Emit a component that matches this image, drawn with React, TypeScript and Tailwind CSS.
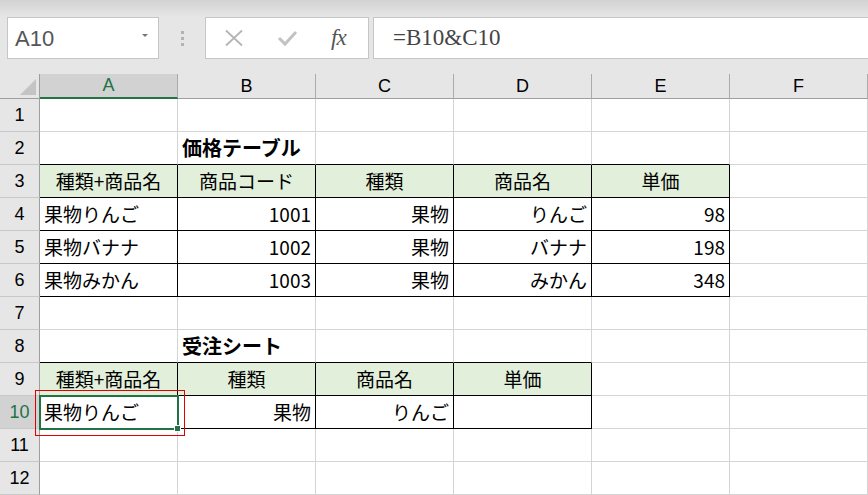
import * as React from 'react'

type Cell = { v: string; align?: 'l' | 'c' | 'r'; bold?: boolean }

const cols = ['A', 'B', 'C', 'D', 'E', 'F']

const data: Record<number, Cell[]> = {
  2: [{ v: '' }, { v: '価格テーブル', bold: true }],
  3: [
    { v: '種類+商品名', align: 'c' },
    { v: '商品コード', align: 'c' },
    { v: '種類', align: 'c' },
    { v: '商品名', align: 'c' },
    { v: '単価', align: 'c' },
  ],
  4: [
    { v: '果物りんご' },
    { v: '1001', align: 'r' },
    { v: '果物', align: 'r' },
    { v: 'りんご', align: 'r' },
    { v: '98', align: 'r' },
  ],
  5: [
    { v: '果物バナナ' },
    { v: '1002', align: 'r' },
    { v: '果物', align: 'r' },
    { v: 'バナナ', align: 'r' },
    { v: '198', align: 'r' },
  ],
  6: [
    { v: '果物みかん' },
    { v: '1003', align: 'r' },
    { v: '果物', align: 'r' },
    { v: 'みかん', align: 'r' },
    { v: '348', align: 'r' },
  ],
  8: [{ v: '' }, { v: '受注シート', bold: true }],
  9: [
    { v: '種類+商品名', align: 'c' },
    { v: '種類', align: 'c' },
    { v: '商品名', align: 'c' },
    { v: '単価', align: 'c' },
  ],
  10: [{ v: '果物りんご' }, { v: '果物', align: 'r' }, { v: 'りんご', align: 'r' }, { v: '' }],
}

const inTable = (r: number, c: number) =>
  (r >= 3 && r <= 6 && c <= 4) || (r >= 9 && r <= 10 && c <= 3)

const isHead = (r: number, c: number) => (r === 3 && c <= 4) || (r === 9 && c <= 3)

const font = { fontFamily: '"Noto Sans CJK JP", "Liberation Sans", sans-serif' }

export default function App() {
  const rows = Array.from({ length: 12 }, (_, i) => i + 1)

  return (
    <div className="w-[868px] h-[495px] overflow-hidden bg-[#e6e6e6] select-none">
      {/* ribbon edge */}
      <div className="h-[17px] bg-gradient-to-b from-[#d2d2d2] to-[#e6e6e6]" />

      {/* formula bar */}
      <div className="flex items-stretch h-[42px] pl-[7px]">
        <div className="w-[152px] bg-white border border-[#c6c6c6] flex items-center justify-between pl-[7px] pr-[10px]">
          <span className="text-[22px] text-[#555]" style={{ fontFamily: '"Liberation Sans", sans-serif' }}>
            A10
          </span>
          <span className="w-0 h-0 border-l-[3px] border-r-[3px] border-t-[3px] border-l-transparent border-r-transparent border-t-[#777] mb-[6px]" />
        </div>
        <div className="w-[46px] flex flex-col items-center justify-center gap-[3px]">
          <span className="w-[3px] h-[3px] bg-[#b3b3b3]" />
          <span className="w-[3px] h-[3px] bg-[#b3b3b3]" />
          <span className="w-[3px] h-[3px] bg-[#b3b3b3]" />
        </div>
        <div className="w-[164px] bg-white border border-[#c6c6c6] flex items-center pl-[17px]">
          <svg width="22" height="22" viewBox="0 0 22 22" className="mr-[32px]">
            <path d="M3 3.5 L19 18.5 M19 3.5 L3 18.5" stroke="#b5b5b5" strokeWidth="1.8" fill="none" />
          </svg>
          <svg width="22" height="22" viewBox="0 0 22 22" className="mr-[32px]">
            <path d="M2 11 L8 17 L19 5" stroke="#c2c2c2" strokeWidth="3" fill="none" />
          </svg>
          <span className="text-[23px] italic text-[#555] tracking-[-1px]" style={{ fontFamily: '"Liberation Serif", serif' }}>
            fx
          </span>
        </div>
        <div className="ml-[4px] flex-1 bg-white border border-[#c6c6c6] border-r-0 flex items-center pl-[19px]">
          <span className="text-[23px] text-[#444]" style={{ fontFamily: '"Liberation Serif", serif' }}>
            =B10&amp;C10
          </span>
        </div>
      </div>

      <div className="h-[15px]" />

      {/* sheet */}
      <div className="grid grid-cols-[40px_repeat(6,138px)] grid-rows-[25px_repeat(12,33px)]">
        {/* corner */}
        <div className="border-r border-b border-[#9e9e9e] bg-[#e6e6e6] relative">
          <span
            className="absolute right-[3px] bottom-[3px] w-0 h-0"
            style={{ borderBottom: '16px solid #c4c4c4', borderLeft: '16px solid transparent' }}
          />
        </div>
        {cols.map((c, i) => (
          <div
            key={c}
            className={
              i === 0
                ? 'flex items-center justify-center bg-[#d2d2d2] border-r border-[#ababab] border-b-2 border-b-[#217346] text-[#217346] text-[18px]'
                : 'flex items-center justify-center bg-[#e6e6e6] border-r border-[#ababab] border-b border-b-[#9e9e9e] text-black text-[18px]'
            }
            style={{ fontFamily: '"Liberation Sans", sans-serif' }}>
            {c}
          </div>
        ))}

        {rows.map(r => (
          <React.Fragment key={r}>
            <div
              className={
                (r === 10
                  ? 'bg-[#d2d2d2] text-[#217346] '
                  : 'bg-[#e6e6e6] text-black ') +
                'flex items-center justify-center text-[18px] border-b border-b-[#c8c8c8] border-r border-r-[#9e9e9e]'
              }
              style={{ fontFamily: '"Liberation Sans", sans-serif' }}>
              {r}
            </div>
            {cols.map((c, ci) => {
              const cell = data[r]?.[ci]
              const bBlack = inTable(r, ci) || inTable(r + 1, ci)
              const rBlack = inTable(r, ci) || inTable(r, ci + 1)
              const align =
                cell?.align === 'c'
                  ? 'justify-center'
                  : cell?.align === 'r'
                  ? 'justify-end pr-[4px]'
                  : 'justify-start pl-[4px]'
              const selected = r === 10 && ci === 0
              return (
                <div
                  key={c}
                  className={
                    'relative flex items-center text-black whitespace-nowrap border-b border-r ' +
                    (selected ? 'z-10 ' : '') +
                    (bBlack ? 'border-b-black ' : 'border-b-[#d4d4d4] ') +
                    (rBlack ? 'border-r-black ' : 'border-r-[#d4d4d4] ') +
                    (isHead(r, ci) ? 'bg-[#e2efda] ' : 'bg-white ') +
                    (cell?.bold ? 'font-bold text-[20px] ' : 'text-[19px] ') +
                    align
                  }
                  style={font}>
                  {cell?.v}
                  {selected && (
                    <>
                      <div className="absolute -left-px -top-px w-[140px] h-[35px] border-2 border-[#217346] pointer-events-none" />
                      <div className="absolute left-[134px] top-[29px] w-[7px] h-[7px] bg-[#217346] border border-white" />
                      <div className="absolute -left-[5px] -top-[6px] w-[150px] h-[46px] border border-[#e00000] pointer-events-none" />
                    </>
                  )}
                </div>
              )
            })}
          </React.Fragment>
        ))}
      </div>
    </div>
  )
}
